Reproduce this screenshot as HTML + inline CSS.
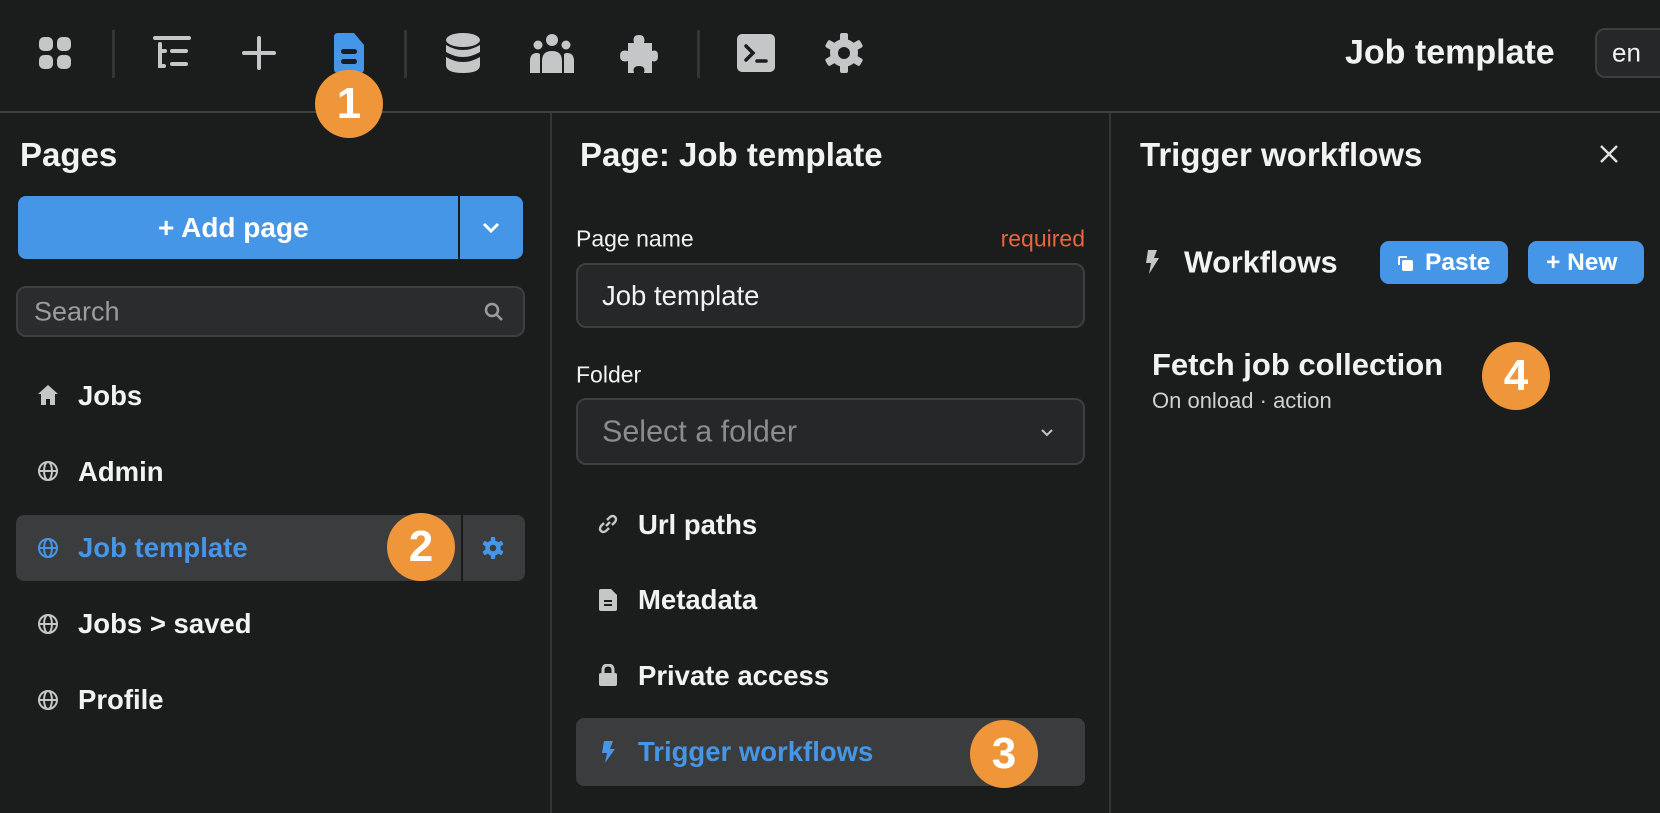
<!DOCTYPE html>
<html><head><meta charset="utf-8"><style>
*{box-sizing:border-box;margin:0;padding:0}
body{width:1660px;height:810px;background:#1b1c1c;font-family:"Liberation Sans",sans-serif;color:#f2f2f2;position:relative;overflow:hidden}
.a{position:absolute}
.vl{position:absolute;width:3px;background:#333536}
.badge{position:absolute;width:68px;height:68px;border-radius:50%;background:#f0963a;color:#fff;font-weight:bold;font-size:44px;text-align:center;line-height:68px}
.t{position:absolute;white-space:nowrap;transform:translateY(-50%)}
.ic{position:absolute;transform:translate(-50%,-50%)}
.h{font-size:33px;font-weight:bold}
.it{font-size:27.5px;font-weight:bold}
</style></head><body>
<div class="a" style="left:0;top:111px;width:1660px;height:2px;background:#3d3f40"></div>
<div class="vl" style="left:112px;top:30px;height:48px"></div>
<div class="vl" style="left:404px;top:30px;height:48px"></div>
<div class="vl" style="left:697px;top:30px;height:48px"></div>
<svg class="ic" style="left:55px;top:53px" width="36" height="36" viewBox="0 0 36 36" fill="#c4c6c7"><rect x="2" y="2" width="14" height="14" rx="5"/><rect x="20" y="2" width="14" height="14" rx="5"/><rect x="2" y="20" width="14" height="14" rx="5"/><rect x="20" y="20" width="14" height="14" rx="5"/></svg>
<svg class="ic" style="left:172px;top:53px" width="40" height="36" viewBox="0 0 40 36" stroke="#c4c6c7" stroke-width="4" stroke-linecap="round" fill="none"><path d="M3 3H37M8 9V31H12M8 16H13M20 16H34M20 29H34"/></svg>
<svg class="ic" style="left:259px;top:53px" width="36" height="36" viewBox="0 0 36 36" stroke="#c4c6c7" stroke-width="4" stroke-linecap="round"><path d="M18 3V33M3 18H33"/></svg>
<svg class="ic" style="left:349px;top:53px" width="30" height="40" viewBox="0 0 30 40"><path d="M4 0H20L30 12V36Q30 40 26 40H4Q0 40 0 36V4Q0 0 4 0Z" fill="#4696e8"/><rect x="7" y="16" width="16" height="5" rx="2.5" fill="#1b1c1c"/><rect x="7" y="26" width="16" height="5" rx="2.5" fill="#1b1c1c"/></svg>
<svg class="ic" style="left:463px;top:53px" width="36" height="40" viewBox="0 0 36 40" fill="#c4c6c7"><ellipse cx="18" cy="7" rx="17" ry="7"/><path d="M1 12Q18 22 35 12V19Q18 29 1 19Z"/><path d="M1 24Q18 34 35 24V32Q35 40 18 40Q1 40 1 32Z"/></svg>
<svg class="ic" style="left:552px;top:53px" width="46" height="40" viewBox="0 0 46 40" fill="#c4c6c7"><circle cx="23" cy="7" r="6"/><circle cx="9" cy="12" r="4.5"/><circle cx="37" cy="12" r="4.5"/><path d="M13 40V28Q13 18 23 18Q33 18 33 28V40Z"/><path d="M1 40V28Q1 20 8 20Q11 20 11 22V40Z"/><path d="M45 40V28Q45 20 38 20Q35 20 35 22V40Z"/></svg>
<svg class="ic" style="left:639px;top:53px" width="38" height="40" viewBox="0 0 38 40" fill="#c4c6c7"><path d="M8 10H14Q12 2 19 2Q26 2 24 10H32V18Q38 16 38 23Q38 30 32 28V40H24Q26 33 19 33Q12 33 14 40H8V28Q0 30 0 23Q0 16 8 18Z"/></svg>
<svg class="ic" style="left:756px;top:53px" width="38" height="38" viewBox="0 0 38 38"><rect x="0" y="0" width="38" height="38" rx="5" fill="#c4c6c7"/><path d="M9 12L16 19L9 26M20 27H29" stroke="#1b1c1c" stroke-width="3.5" fill="none" stroke-linecap="round"/></svg>
<svg class="ic" style="left:844px;top:53px" width="40" height="40" viewBox="0 0 40 40"><g fill="#c4c6c7"><circle cx="20" cy="20" r="14"/><g id="t"><rect x="16" y="0" width="8" height="9" rx="2"/><rect x="16" y="31" width="8" height="9" rx="2"/></g><use href="#t" transform="rotate(60 20 20)"/><use href="#t" transform="rotate(120 20 20)"/></g><circle cx="20" cy="20" r="6" fill="#1b1c1c"/></svg>
<div class="badge" style="left:315px;top:70px">1</div>
<div class="t h" style="left:1345px;top:53px;font-size:34px">Job template</div>
<div class="a" style="left:1595px;top:28px;width:80px;height:50px;border:2px solid #3d3f40;border-radius:10px;background:#262728"></div>
<div class="t" style="left:1612px;top:53px;font-size:26px">en</div>

<div class="a" style="left:550px;top:113px;width:2px;height:700px;background:#333536"></div>
<div class="a" style="left:1109px;top:113px;width:2px;height:700px;background:#333536"></div>

<div class="t h" style="left:20px;top:155px">Pages</div>
<div class="a" style="left:18px;top:196px;width:505px;height:63px;background:#4696e8;border-radius:8px"></div>
<div class="a" style="left:458px;top:196px;width:2px;height:63px;background:#1b1c1c"></div>
<div class="t" style="left:158px;top:228px;font-size:28px;font-weight:bold;color:#fff">+ Add page</div>
<svg class="ic" style="left:491px;top:228px" width="18" height="12" viewBox="0 0 18 12" stroke="#fff" stroke-width="3" fill="none"><path d="M2 2L9 9L16 2"/></svg>
<div class="a" style="left:16px;top:286px;width:509px;height:51px;background:#2b2c2e;border:2px solid #3d3f40;border-radius:10px"></div>
<div class="t" style="left:34px;top:312px;font-size:27px;color:#9a9c9e">Search</div>
<svg class="ic" style="left:494px;top:312px" width="20" height="20" viewBox="0 0 20 20" stroke="#9a9c9e" stroke-width="2.5" fill="none"><circle cx="8" cy="8" r="6"/><path d="M12.5 12.5L18 18"/></svg>

<div class="a" style="left:16px;top:515px;width:509px;height:66px;background:#3a3c3d;border-radius:8px"></div>
<div class="a" style="left:461px;top:515px;width:2px;height:66px;background:#1b1c1c"></div>
<svg class="ic" style="left:48px;top:395px" width="22" height="22" viewBox="0 0 22 22" fill="#c4c6c7"><path d="M11 1L21 10H18V21H13V15H9V21H4V10H1Z"/></svg>
<div class="t it" style="left:78px;top:396px">Jobs</div>
<svg width="0" height="0" style="position:absolute"><defs><g id="gl" fill="none" stroke-width="2"><circle cx="11" cy="11" r="9"/><ellipse cx="11" cy="11" rx="4" ry="9"/><path d="M2 11H20"/></g></defs></svg>
<svg class="ic" style="left:48px;top:471px" width="22" height="22" stroke="#c4c6c7"><use href="#gl"/></svg>
<div class="t it" style="left:78px;top:472px">Admin</div>
<svg class="ic" style="left:48px;top:548px" width="22" height="22" stroke="#4696e8"><use href="#gl"/></svg>
<div class="t it" style="left:78px;top:548px;color:#4696e8">Job template</div>
<svg class="ic" style="left:493px;top:548px" width="22" height="22" viewBox="0 0 40 40"><g fill="#4696e8"><circle cx="20" cy="20" r="14"/><rect x="16" y="0" width="8" height="9" rx="2"/><rect x="16" y="31" width="8" height="9" rx="2"/><rect x="16" y="0" width="8" height="9" rx="2" transform="rotate(60 20 20)"/><rect x="16" y="31" width="8" height="9" rx="2" transform="rotate(60 20 20)"/><rect x="16" y="0" width="8" height="9" rx="2" transform="rotate(120 20 20)"/><rect x="16" y="31" width="8" height="9" rx="2" transform="rotate(120 20 20)"/></g><circle cx="20" cy="20" r="6" fill="#3a3c3d"/></svg>
<div class="badge" style="left:387px;top:513px">2</div>
<svg class="ic" style="left:48px;top:624px" width="22" height="22" stroke="#c4c6c7"><use href="#gl"/></svg>
<div class="t it" style="left:78px;top:624px">Jobs &gt; saved</div>
<svg class="ic" style="left:48px;top:700px" width="22" height="22" stroke="#c4c6c7"><use href="#gl"/></svg>
<div class="t it" style="left:78px;top:700px">Profile</div>

<div class="t h" style="left:580px;top:155px">Page: Job template</div>
<div class="t" style="left:576px;top:239px;font-size:23px">Page name</div>
<div class="t" style="right:575px;top:239px;font-size:23px;color:#e8653e">required</div>
<div class="a" style="left:576px;top:263px;width:509px;height:65px;background:#262728;border:2px solid #3d3f40;border-radius:10px"></div>
<div class="t" style="left:602px;top:296px;font-size:27.5px">Job template</div>
<div class="t" style="left:576px;top:375px;font-size:23px">Folder</div>
<div class="a" style="left:576px;top:398px;width:509px;height:67px;background:#262728;border:2px solid #3d3f40;border-radius:10px"></div>
<div class="t" style="left:602px;top:432px;font-size:30.5px;color:#8a8c8e">Select a folder</div>
<svg class="ic" style="left:1047px;top:433px" width="12" height="8" viewBox="0 0 12 8" stroke="#c4c6c7" stroke-width="2" fill="none"><path d="M1 1L6 6L11 1"/></svg>

<svg class="ic" style="left:608px;top:524px" width="22" height="22" viewBox="0 0 22 22" stroke="#c4c6c7" stroke-width="2.4" fill="none"><path d="M9 13L13 9M7 10L4 13Q2 16 4 18Q6 20 9 18L12 15M10 7L13 4Q16 2 18 4Q20 6 18 9L15 12"/></svg>
<div class="t it" style="left:638px;top:525px">Url paths</div>
<svg class="ic" style="left:608px;top:600px" width="18" height="22" viewBox="0 0 18 22"><path d="M2 0H12L18 6V20Q18 22 16 22H2Q0 22 0 20V2Q0 0 2 0Z" fill="#c4c6c7"/><path d="M5 12H13M5 16H13" stroke="#1b1c1c" stroke-width="2"/></svg>
<div class="t it" style="left:638px;top:600px">Metadata</div>
<svg class="ic" style="left:608px;top:675px" width="20" height="22" viewBox="0 0 20 22"><path d="M5 10V6Q5 1 10 1Q15 1 15 6V10" stroke="#c4c6c7" stroke-width="3" fill="none"/><rect x="1" y="9" width="18" height="13" rx="2" fill="#c4c6c7"/></svg>
<div class="t it" style="left:638px;top:676px">Private access</div>
<div class="a" style="left:576px;top:718px;width:509px;height:68px;background:#3a3c3d;border-radius:8px"></div>
<svg class="ic" style="left:608px;top:752px" width="14" height="22" viewBox="0 0 14 22" fill="#4696e8"><path d="M3 0H12L9 8H14L4 22L6 12H1Z"/></svg>
<div class="t it" style="left:638px;top:752px;color:#4696e8">Trigger workflows</div>
<div class="badge" style="left:970px;top:720px">3</div>

<div class="t h" style="left:1140px;top:155px">Trigger workflows</div>
<svg class="ic" style="left:1609px;top:154px" width="20" height="20" viewBox="0 0 20 20" stroke="#e0e0e0" stroke-width="2.4"><path d="M2 2L18 18M18 2L2 18"/></svg>
<svg class="ic" style="left:1152px;top:262px" width="14" height="24" viewBox="0 0 14 24" fill="#c4c6c7"><path d="M3 0H12L9 8H14L4 24L6 13H1Z"/></svg>
<div class="t" style="left:1184px;top:263px;font-size:30.5px;font-weight:bold">Workflows</div>
<div class="a" style="left:1380px;top:241px;width:128px;height:43px;background:#4696e8;border-radius:9px"></div>
<svg class="ic" style="left:1405px;top:263px" width="16" height="16" viewBox="0 0 16 16" fill="#fff"><path d="M1 3Q1 1 3 1H10V3H3V10H1Z"/><rect x="5" y="5" width="11" height="11" rx="2"/></svg>
<div class="t" style="left:1425px;top:263px;font-size:24.5px;font-weight:bold;color:#fff">Paste</div>
<div class="a" style="left:1528px;top:241px;width:116px;height:43px;background:#4696e8;border-radius:9px"></div>
<div class="t" style="left:1546px;top:263px;font-size:24.5px;font-weight:bold;color:#fff">+ New</div>
<div class="t" style="left:1152px;top:365px;font-size:31px;font-weight:bold">Fetch job collection</div>
<div class="t" style="left:1152px;top:401px;font-size:22px;color:#d0d0d0">On onload · action</div>
<div class="badge" style="left:1482px;top:342px">4</div>
</body></html>
